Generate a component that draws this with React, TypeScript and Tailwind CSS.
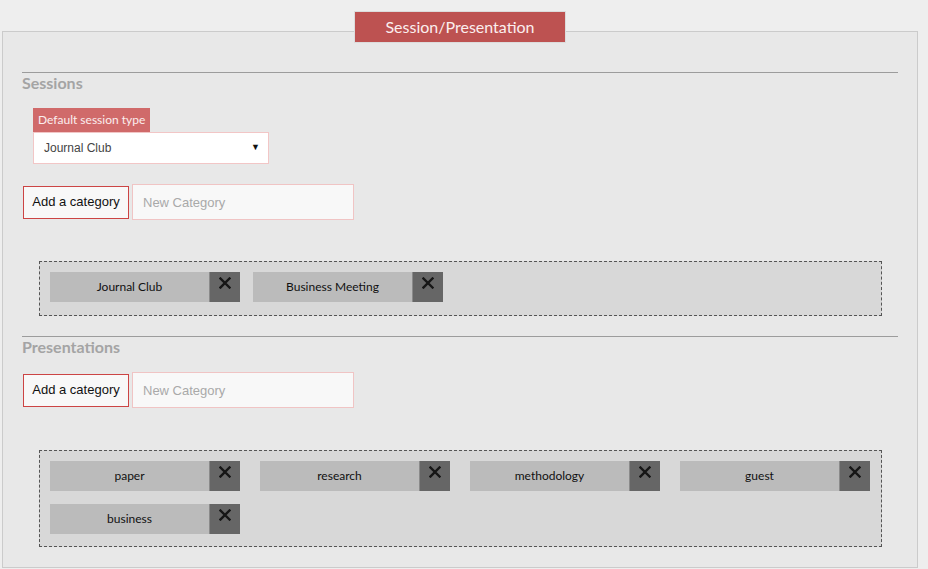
import React from "react";

const lato = "font-['Lato','Noto_Sans',sans-serif]";
const arial = "font-['Liberation_Sans','Arial',sans-serif]";

function CloseIcon() {
  return (
    <svg width="12" height="12" viewBox="0 0 12 12" aria-hidden="true">
      <path
        d="M1.5 1.5 L10.5 10.5 M10.5 1.5 L1.5 10.5"
        stroke="#161616"
        strokeWidth="2.4"
        strokeLinecap="square"
      />
    </svg>
  );
}

function Tag({ label }: { label: string }) {
  return (
    <div className="flex h-[30px] w-[190px]">
      <div
        className={`${lato} flex w-[159px] items-center justify-center bg-[#bbbbbb] text-[12px] text-[#111111]`}
      >
        {label}
      </div>
      <button
        type="button"
        className="flex w-[31px] justify-center border-l border-[#8a8a8a] bg-[#666666] pt-[5px]"
      >
        <CloseIcon />
      </button>
    </div>
  );
}

function SectionHeading({ title }: { title: string }) {
  return (
    <div>
      <div className="border-t border-[#9c9c9c]" />
      <h2
        className={`${lato} text-[16px] font-bold leading-[20px] text-[#a4a4a4]`}
      >
        {title}
      </h2>
    </div>
  );
}

function AddCategoryRow() {
  return (
    <div className="ml-[1px] flex items-center gap-[3px]">
      <button
        type="button"
        className={`${arial} h-[33px] w-[106px] border border-[#cc4444] bg-[#f8f8f8] text-[13px] text-[#111111]`}
      >
        Add a category
      </button>
      <input
        type="text"
        placeholder="New Category"
        className={`${arial} h-[36px] w-[222px] border border-[#f0c4c4] bg-[#f8f8f8] px-[10px] text-[13px] text-[#333333] outline-none placeholder:text-[#a9a9a9]`}
      />
    </div>
  );
}

export default function App() {
  const sessions = ["Journal Club", "Business Meeting"];
  const presentations = ["paper", "research", "methodology", "guest", "business"];

  return (
    <div className="min-h-[569px] bg-[#eeeeee] pl-[2px] pr-[10px] pt-[11px]">
      <div className="flex flex-col items-center">
        <div
          className={`${lato} relative z-10 flex h-[32px] w-[212px] items-center justify-center border border-[#dcdcdc] bg-[#bd5251] text-[16px] text-[#fbeeee]`}
        >
          Session/Presentation
        </div>

        <div className="-mt-[12px] w-full border border-[#cbcbcb] bg-[#e8e8e8] px-[19px] pb-[20px] pt-[40px]">
          <SectionHeading title="Sessions" />

          <div className="ml-[11px] mt-[15px] flex w-[236px] flex-col items-start">
            <div
              className={`${lato} flex h-[24px] items-center bg-[#d06a6a] px-[5px] text-[12px] text-[#fbeeee]`}
            >
              Default session type
            </div>
            <div
              className={`${arial} flex h-[32px] w-full items-center justify-between border border-[#f2c6c6] bg-white pl-[10px] pr-[8px] text-[12px] text-[#444444]`}
            >
              <span>Journal Club</span>
              <span className="text-[9px] text-[#111111]">▼</span>
            </div>
          </div>

          <div className="mt-[20px]">
            <AddCategoryRow />
          </div>

          <div className="ml-[17px] mr-[16px] mt-[41px] border border-dashed border-[#555555] bg-[#d8d8d8] px-[10px] pb-[13px] pt-[10px]">
            <div className="flex flex-wrap gap-x-[13px] gap-y-[13px]">
              {sessions.map((s) => (
                <Tag key={s} label={s} />
              ))}
            </div>
          </div>

          <div className="mt-[20px]">
            <SectionHeading title="Presentations" />
          </div>

          <div className="mt-[15px]">
            <AddCategoryRow />
          </div>

          <div className="ml-[17px] mr-[16px] mt-[42px] border border-dashed border-[#555555] bg-[#d8d8d8] px-[10px] pb-[12px] pt-[10px]">
            <div className="flex flex-wrap gap-x-[20px] gap-y-[13px]">
              {presentations.map((p) => (
                <Tag key={p} label={p} />
              ))}
            </div>
          </div>
        </div>
      </div>
    </div>
  );
}
